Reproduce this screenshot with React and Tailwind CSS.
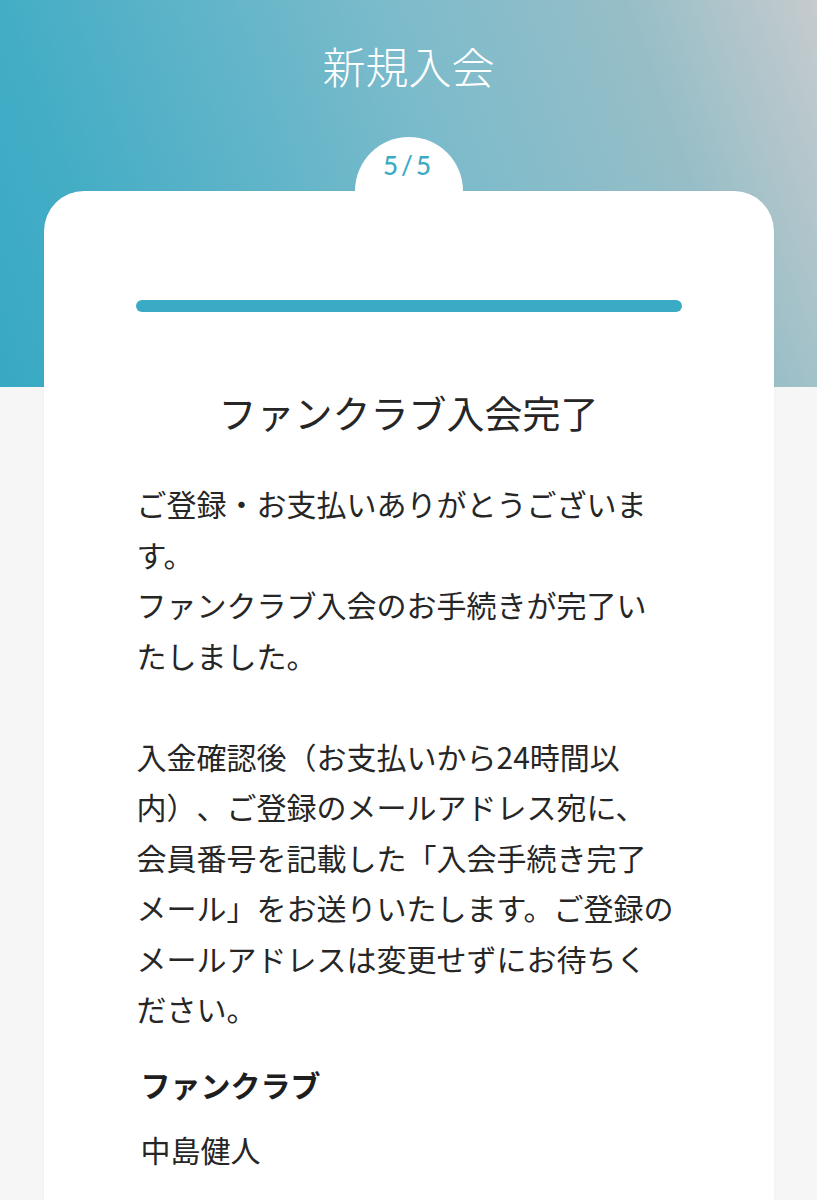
export default function App() {
  const font = { fontFamily: '"Noto Sans CJK JP", "Noto Sans", sans-serif' };
  return (
    <div
      className="h-[1200px] overflow-hidden bg-[#f6f6f6] bg-[linear-gradient(70deg,#38a9c3_0%,#44adc6_15%,#7cbbcb_55%,#97bec7_80%,#c6cbce_100%)] bg-no-repeat bg-[length:100%_387px]"
      style={font}
    >
      <h1 className="pt-[38px] text-center text-[43px] leading-[54px] font-light text-white">
        新規入会
      </h1>

      <div className="relative mx-auto mt-[99px] w-[730px] rounded-t-[40px] bg-white px-[92px] pb-10 shadow-[0_0_2px_rgba(0,0,0,0.06)]">
        <div className="absolute left-1/2 top-[-54px] h-[108px] w-[108px] -translate-x-1/2 rounded-full bg-white pt-[12px] text-center">
          <span className="font-['Lato',sans-serif] text-[26px] font-medium leading-[32px] tracking-[3px] text-[#3aabc4]">
            5/5
          </span>
        </div>

        <div className="relative pt-[109px]">
          <div className="h-[12px] rounded-full bg-[#3aabc4]" />
        </div>

        <h2 className="mt-[75px] text-center text-[38px] leading-[50px] font-normal text-[#262626]">
          ファンクラブ入会完了
        </h2>

        <p className="mt-[41px] pl-px text-[30px] leading-[50.5px] text-[#262626] [text-spacing-trim:space-all]">
          ご登録・お支払いありがとうございま
          <br />
          す。
          <br />
          ファンクラブ入会のお手続きが完了い
          <br />
          たしました。
          <br />
          <br />
          入金確認後（お支払いから24時間以
          <br />
          内）、ご登録のメールアドレス宛に、
          <br />
          会員番号を記載した「入会手続き完了
          <br />
          メール」をお送りいたします。ご登録の
          <br />
          メールアドレスは変更せずにお待ちく
          <br />
          ださい。
        </p>

        <h3 className="mt-[30px] pl-[5px] text-[30px] leading-[40px] font-bold text-[#1e1e1e]">
          ファンクラブ
        </h3>
        <p className="mt-[25px] pl-[5px] text-[30px] leading-[40px] text-[#262626]">
          中島健人
        </p>

        <div className="mt-[31px] h-[60px] border-t-[3px] border-[#ebebeb]" />
      </div>
    </div>
  );
}
